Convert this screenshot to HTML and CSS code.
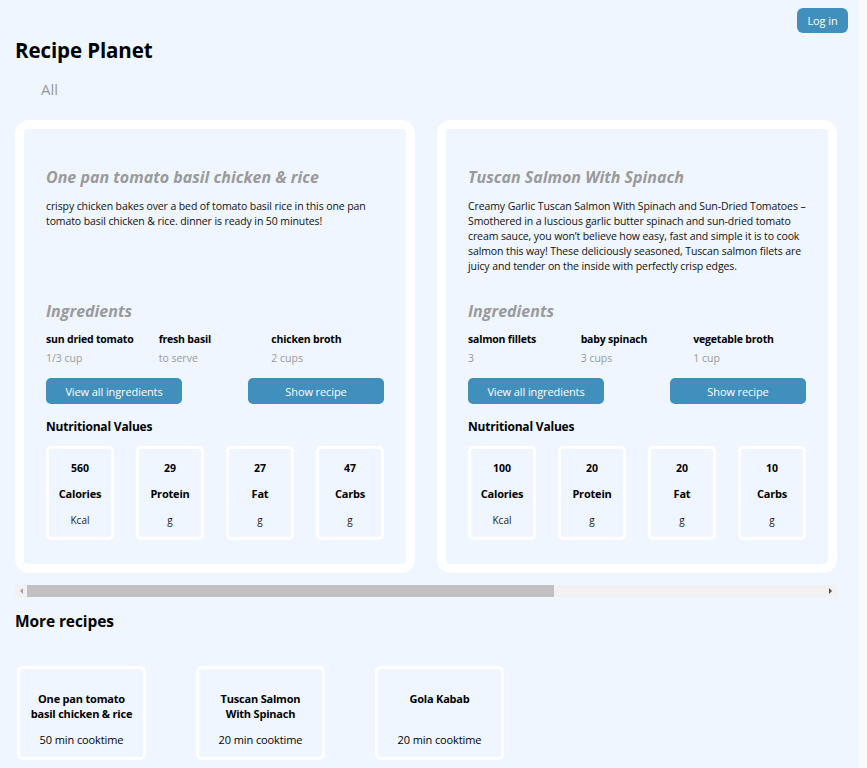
FILE: index.html
```html
<!DOCTYPE html>
<html lang="en">
<head>
<meta charset="utf-8">
<title>Recipe Planet</title>
<link rel="stylesheet" href="styles.css">
</head>
<body>
<div class="page">
  <div class="topbar"><button class="btn login">Log in</button></div>
  <h1 class="brand">Recipe Planet</h1>
  <div class="filters"><span class="filter">All</span></div>

  <div class="scroller">
    <div class="track">
      <article class="card">
        <div class="card-inner">
          <h2 class="title">One pan tomato basil chicken &amp; rice</h2>
          <p class="desc">crispy chicken bakes over a bed of tomato basil rice in this one pan tomato basil chicken &amp; rice. dinner is ready in 50 minutes!</p>
          <h3 class="ing-head">Ingredients</h3>
          <div class="ing-grid">
            <div class="ing"><div class="ing-name">sun dried tomato</div><div class="ing-amt">1/3 cup</div></div>
            <div class="ing"><div class="ing-name">fresh basil</div><div class="ing-amt">to serve</div></div>
            <div class="ing"><div class="ing-name">chicken broth</div><div class="ing-amt">2 cups</div></div>
          </div>
          <div class="actions"><button class="btn act">View all ingredients</button><button class="btn act">Show recipe</button></div>
          <h4 class="nv-head">Nutritional Values</h4>
          <div class="nv">
            <div class="nv-box"><div class="nv-num">560</div><div class="nv-label">Calories</div><div class="nv-unit">Kcal</div></div>
            <div class="nv-box"><div class="nv-num">29</div><div class="nv-label">Protein</div><div class="nv-unit">g</div></div>
            <div class="nv-box"><div class="nv-num">27</div><div class="nv-label">Fat</div><div class="nv-unit">g</div></div>
            <div class="nv-box"><div class="nv-num">47</div><div class="nv-label">Carbs</div><div class="nv-unit">g</div></div>
          </div>
        </div>
      </article>

      <article class="card">
        <div class="card-inner">
          <h2 class="title">Tuscan Salmon With Spinach</h2>
          <p class="desc">Creamy Garlic Tuscan Salmon With Spinach and Sun-Dried Tomatoes – Smothered in a luscious garlic butter spinach and sun-dried tomato cream sauce, you won’t believe how easy, fast and simple it is to cook salmon this way! These deliciously seasoned, Tuscan salmon filets are juicy and tender on the inside with perfectly crisp edges.</p>
          <h3 class="ing-head">Ingredients</h3>
          <div class="ing-grid">
            <div class="ing"><div class="ing-name">salmon fillets</div><div class="ing-amt">3</div></div>
            <div class="ing"><div class="ing-name">baby spinach</div><div class="ing-amt">3 cups</div></div>
            <div class="ing"><div class="ing-name">vegetable broth</div><div class="ing-amt">1 cup</div></div>
          </div>
          <div class="actions"><button class="btn act">View all ingredients</button><button class="btn act">Show recipe</button></div>
          <h4 class="nv-head">Nutritional Values</h4>
          <div class="nv">
            <div class="nv-box"><div class="nv-num">100</div><div class="nv-label">Calories</div><div class="nv-unit">Kcal</div></div>
            <div class="nv-box"><div class="nv-num">20</div><div class="nv-label">Protein</div><div class="nv-unit">g</div></div>
            <div class="nv-box"><div class="nv-num">20</div><div class="nv-label">Fat</div><div class="nv-unit">g</div></div>
            <div class="nv-box"><div class="nv-num">10</div><div class="nv-label">Carbs</div><div class="nv-unit">g</div></div>
          </div>
        </div>
      </article>
    </div>
  </div>
  <div class="hscroll">
    <div class="sb-btn"><svg width="4" height="6" viewBox="0 0 4 6"><path d="M4 0V6L1 3Z" fill="#a3a3a3"/></svg></div>
    <div class="sb-track"><div class="sb-thumb"></div></div>
    <div class="sb-btn"><svg width="4" height="6" viewBox="0 0 4 6"><path d="M0 0V6L3 3Z" fill="#505050"/></svg></div>
  </div>

  <h2 class="more-head">More recipes</h2>
  <div class="more">
    <div class="mini"><div class="mini-title">One pan tomato basil chicken &amp; rice</div><div class="mini-time">50 min cooktime</div></div>
    <div class="mini"><div class="mini-title">Tuscan Salmon With Spinach</div><div class="mini-time">20 min cooktime</div></div>
    <div class="mini"><div class="mini-title">Gola Kabab</div><div class="mini-time">20 min cooktime</div></div>
  </div>
</div>
</body>
</html>
```

FILE: styles.css
```css
html {
  background: #fafafa;
}
body {
  margin: 0;
  font-family: "Open Sans", "Noto Sans", sans-serif;
  color: #000;
}
.page {
  width: 859px;
  min-height: 768px;
  box-sizing: border-box;
  background: #eff6ff;
  padding: 8px 11px 0 15px;
  overflow: hidden;
}
.topbar {
  display: flex;
  justify-content: flex-end;
}
.btn {
  font-family: inherit;
  border: none;
  background: #418fbc;
  color: #fff;
  cursor: pointer;
}
.login {
  width: 51px;
  height: 25px;
  border-radius: 6px;
  font-size: 11px;
  letter-spacing: -0.1px;
  padding: 0;
}
.brand {
  margin: 4px 0 0;
  font-size: 20.5px;
  line-height: 26px;
  font-weight: 700;
  letter-spacing: -0.1px;
}
.filters {
  margin-top: 16px;
  padding-left: 26px;
  line-height: 20px;
  height: 20px;
}
.filter {
  font-size: 15px;
  line-height: 20px;
  color: #999;
}
.scroller {
  margin-top: 21px;
  width: 822px;
  overflow: hidden;
  padding-bottom: 12px;
}
.track {
  display: flex;
  gap: 22px;
}
.card {
  flex: 0 0 400px;
  box-sizing: border-box;
  background: #fff;
  border-radius: 14px;
  padding: 9px;
}
.card-inner {
  background: #eff6ff;
  border-radius: 4px;
  padding: 38px 22px 24px;
}
.title {
  margin: 0;
  font-size: 16px;
  line-height: 20px;
  font-style: italic;
  font-weight: 700;
  color: #9a9a9a;
}
.desc {
  margin: 12px 0 0;
  height: 90px;
  font-size: 10.5px;
  letter-spacing: -0.1px;
  line-height: 15px;
  color: #111;
}
.ing-head {
  margin: 12px 0 0;
  font-size: 16px;
  line-height: 20px;
  font-style: italic;
  font-weight: 700;
  color: #9a9a9a;
}
.ing-grid {
  display: grid;
  grid-template-columns: repeat(3, 1fr);
  margin-top: 11px;
}
.ing-name {
  font-size: 10.5px;
  letter-spacing: -0.2px;
  line-height: 15px;
  font-weight: 700;
}
.ing-amt {
  margin-top: 4px;
  font-size: 10.5px;
  line-height: 15px;
  color: #9a9a9a;
}
.actions {
  display: flex;
  justify-content: space-between;
  margin-top: 12px;
}
.act {
  width: 136px;
  height: 26px;
  border-radius: 5px;
  font-size: 11px;
  letter-spacing: -0.1px;
  padding: 0;
}
.nv-head {
  margin: 14px 0 0;
  font-size: 12px;
  letter-spacing: -0.2px;
  line-height: 18px;
  font-weight: 700;
}
.nv {
  display: flex;
  justify-content: space-between;
  margin-top: 10px;
}
.nv-box {
  width: 68px;
  height: 94px;
  box-sizing: border-box;
  border: 3px solid #fff;
  border-radius: 5px;
  padding-top: 11px;
  display: flex;
  flex-direction: column;
  align-items: center;
  gap: 10px;
  font-size: 10.5px;
  line-height: 16px;
}
.nv-num {
  font-weight: 700;
}
.nv-label {
  font-weight: 700;
  font-size: 11px;
  letter-spacing: -0.2px;
}
.nv-unit {
  color: #222;
  font-size: 10px;
}
.hscroll {
  display: flex;
  width: 822px;
  height: 12px;
  background: #f1f1f1;
}
.sb-btn {
  flex: 0 0 12px;
  display: flex;
  align-items: center;
  justify-content: center;
}
.sb-track {
  flex: 1;
}
.sb-thumb {
  width: 527px;
  height: 12px;
  background: #c1c1c1;
}
.more-head {
  margin: 14px 0 0;
  font-size: 15.5px;
  letter-spacing: -0.1px;
  line-height: 20px;
  font-weight: 700;
}
.more {
  display: flex;
  gap: 50px;
  margin: 35px 0 0 2px;
}
.mini {
  width: 129px;
  height: 94px;
  box-sizing: border-box;
  border: 3px solid #fff;
  border-radius: 6px;
  padding: 22px 8px 0;
  text-align: center;
}
.mini-title {
  height: 30px;
  font-size: 11px;
  letter-spacing: -0.2px;
  line-height: 15px;
  font-weight: 700;
}
.mini-time {
  margin-top: 11px;
  font-size: 11px;
  letter-spacing: -0.1px;
  line-height: 15px;
}
```
